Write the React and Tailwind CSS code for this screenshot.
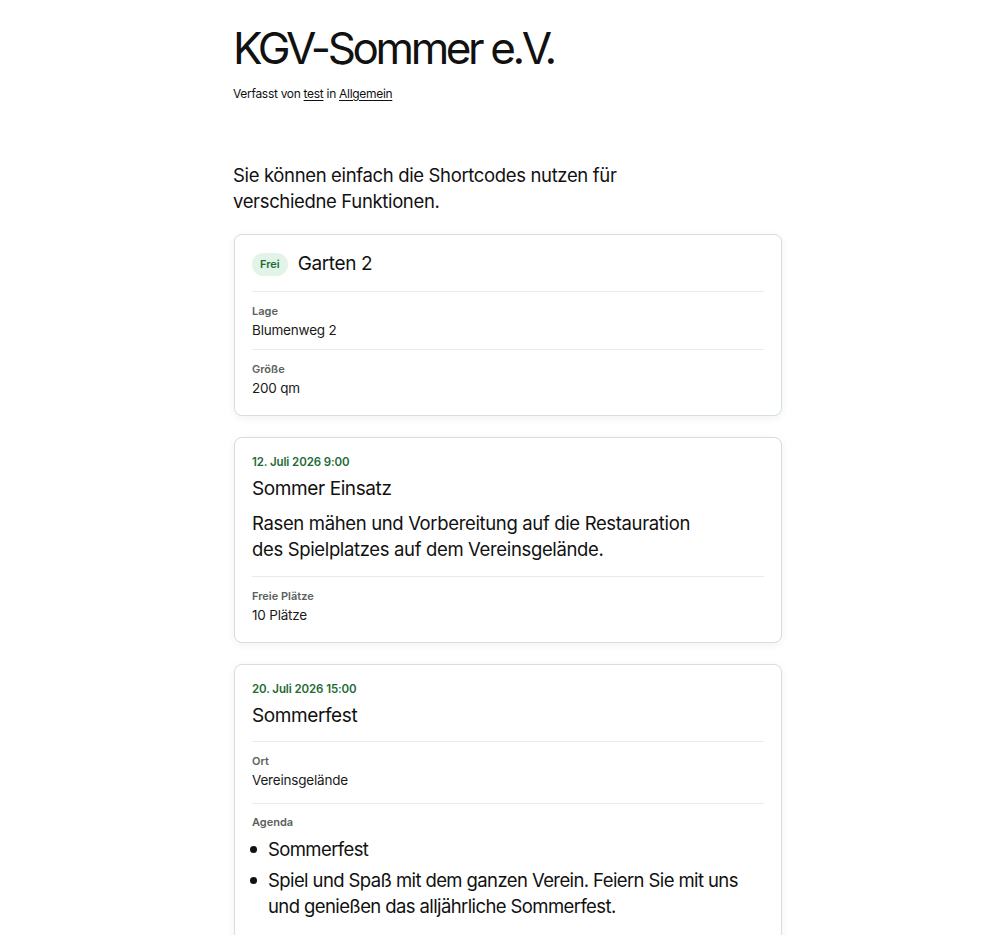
import React from "react";

const font = { fontFamily: "Inter, 'Noto Sans', sans-serif" };

function Label({ children }) {
  return <div className="text-[11px] font-semibold leading-[16px] text-[#5a615c]">{children}</div>;
}

function Field({ label, value, extra = false }) {
  return (
    <div className={"border-t border-[#e6ebe8] pt-[11px] " + (extra ? "pb-[12px]" : "pb-[8px]")}>
      <Label>{label}</Label>
      <div className="text-[13.5px] leading-[22px] text-[#1a1a1a] tracking-[-0.2px]">{value}</div>
    </div>
  );
}

function Card({ children }) {
  return (
    <div className="rounded-[8px] border border-[#d5e0da] bg-white px-[17px] shadow-[0_2px_8px_rgba(0,0,0,0.06)]">
      {children}
    </div>
  );
}

function Bullet({ children, className = "" }) {
  return (
    <li className={"flex " + className}>
      <span className="mt-[10px] -ml-[2px] mr-[11px] h-[7px] w-[7px] shrink-0 rounded-full bg-[#111]" />
      <span>{children}</span>
    </li>
  );
}

export default function App() {
  return (
    <div className="min-h-screen bg-white text-[#111]" style={font}>
      <div className="ml-[233px] w-[549px] pt-[22px]">
        <h1 className="text-[44px] leading-[52px] font-normal tracking-[-3.4px] text-[#111]">KGV-Sommer e.V.</h1>
        <div className="mt-[11px] text-[12px] leading-[18px] tracking-[-0.3px] text-[#111]">
          Verfasst von <span className="underline underline-offset-2">test</span> in{" "}
          <span className="underline underline-offset-2">Allgemein</span>
        </div>
        <p className="mt-[59px] text-[18.5px] leading-[26px] tracking-[-0.35px] text-[#111]">
          Sie können einfach die Shortcodes nutzen für
          <br />
          verschiedne Funktionen.
        </p>

        <div className="mt-[20px] ml-px flex flex-col gap-[21px]">
          <Card>
            <div className="flex items-center gap-[10px] pt-[16px] pb-[14px]">
              <span className="rounded-full bg-[#e2f3e7] px-[8px] py-[3px] text-[11px] font-semibold leading-[17px] text-[#1e6b35]">
                Frei
              </span>
              <span className="text-[19px] leading-[26px] tracking-[-0.4px] text-[#111]">Garten 2</span>
            </div>
            <Field label="Lage" value="Blumenweg 2" />
            <Field label="Größe" value="200 qm" />
            <div className="h-[8px]" />
          </Card>

          <Card>
            <div className="pt-[15px]">
              <div className="text-[11.5px] font-semibold leading-[18px] tracking-[-0.1px] text-[#1e6b35]">12. Juli 2026 9:00</div>
              <div className="mt-[5px] text-[19px] leading-[26px] tracking-[-0.4px] text-[#111]">Sommer Einsatz</div>
              <p className="mt-[8px] pb-[14px] text-[18.5px] leading-[26px] tracking-[-0.35px] text-[#111]">
                Rasen mähen und Vorbereitung auf die Restauration
                <br />
                des Spielplatzes auf dem Vereinsgelände.
              </p>
            </div>
            <Field label="Freie Plätze" value="10 Plätze" />
            <div className="h-[8px]" />
          </Card>

          <Card>
            <div className="pt-[15px] pb-[12px]">
              <div className="text-[11.5px] font-semibold leading-[18px] tracking-[-0.1px] text-[#1e6b35]">20. Juli 2026 15:00</div>
              <div className="mt-[5px] text-[19px] leading-[26px] tracking-[-0.4px] text-[#111]">Sommerfest</div>
            </div>
            <Field label="Ort" value="Vereinsgelände" extra />
            <div className="border-t border-[#e6ebe8] pt-[10px] pb-[20px]">
              <Label>Agenda</Label>
              <ul className="mt-[6px] text-[18.5px] leading-[26px] tracking-[-0.6px] text-[#111]">
                <Bullet>Sommerfest</Bullet>
                <Bullet className="mt-[5px]">
                  Spiel und Spaß mit dem ganzen Verein. Feiern Sie mit uns
                  <br />
                  und genießen das alljährliche Sommerfest.
                </Bullet>
              </ul>
            </div>
          </Card>
        </div>
      </div>
    </div>
  );
}
